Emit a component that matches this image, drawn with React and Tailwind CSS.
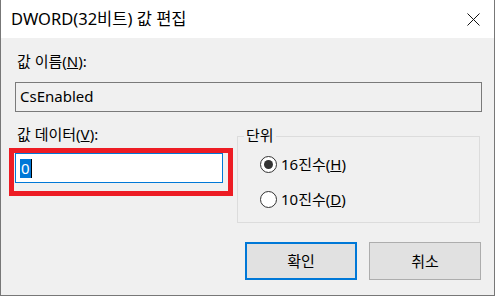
import React from "react";

const font = { fontFamily: '"Noto Sans", "Noto Sans CJK KR", sans-serif' };

function Radio({ checked, children }) {
  return (
    <label className="flex items-center h-[20px]">
      <span className="w-[17px] h-[17px] rounded-full border border-[#333] bg-white flex items-center justify-center">
        {checked && <span className="w-[9px] h-[9px] rounded-full bg-[#333]" />}
      </span>
      <span className="ml-[4px] text-[15px] text-black">{children}</span>
    </label>
  );
}

export default function App() {
  return (
    <div className="w-[499px] h-[300px] bg-white" style={font}>
      <div className="w-[495px] h-[296px] border-l border-r border-b border-[#777] flex flex-col">
        {/* title bar */}
        <div className="h-[38px] bg-white flex items-center justify-between pl-[10px] pr-[14px]">
          <span className="text-[16.5px] text-black leading-none">DWORD(32비트) 값 편집</span>
          <svg width="13" height="13" viewBox="0 0 13 13" className="block">
            <path d="M0.5 0.5 L12.5 12.5 M12.5 0.5 L0.5 12.5" stroke="#111" strokeWidth="1" fill="none" />
          </svg>
        </div>

        {/* body */}
        <div className="flex-1 bg-[#f0f0f0] pl-[14px] pr-[12px] text-[15px] text-black">
          <div className="mt-[13px] h-[20px] leading-[20px] ml-[2px]">
            값 이름(<u className="underline-offset-1">N</u>):
          </div>
          <div className="mt-[11px] h-[30px] border border-[#7a7a7a] bg-[#f0f0f0] pl-[4px] leading-[26px]">
            CsEnabled
          </div>

          <div className="flex mt-[12px]">
            <div className="w-[222px]">
              <div className="h-[20px] leading-[20px] ml-[2px]">
                값 데이터(<u className="underline-offset-1">V</u>):
              </div>
              <div className="relative mt-[9px] w-[208px] h-[30px] border border-[#0078d7] bg-white flex items-center pl-[4px]">
                <span className="bg-[#0078d7] text-white h-[19px] leading-[19px] px-[1px]">0</span>
                <span className="w-px h-[19px] bg-black" />
                <div className="absolute -left-[7px] -top-[6px] w-[224px] h-[48px] border-[5px] border-[#ed1c24]" />
              </div>
            </div>

            <div className="relative mt-[12px] w-[243px] h-[87px] border border-[#dcdcdc] pl-[22px] pt-[17px] flex flex-col gap-[15px]">
              <span className="absolute left-[6px] -top-[12px] h-[20px] leading-[20px] px-[2px] bg-[#f0f0f0]">단위</span>
              <Radio checked>
                16진수(<u className="underline-offset-1">H</u>)
              </Radio>
              <Radio>
                10진수(<u className="underline-offset-1">D</u>)
              </Radio>
            </div>
          </div>

          <div className="flex justify-end gap-[12px] mt-[19px] mr-[1px]">
            <button className="w-[112px] h-[38px] bg-[#e1e1e1] border-2 border-[#0078d7] text-[15px]">확인</button>
            <button className="w-[112px] h-[38px] bg-[#e1e1e1] border border-[#adadad] text-[15px]">취소</button>
          </div>
        </div>
      </div>
    </div>
  );
}
